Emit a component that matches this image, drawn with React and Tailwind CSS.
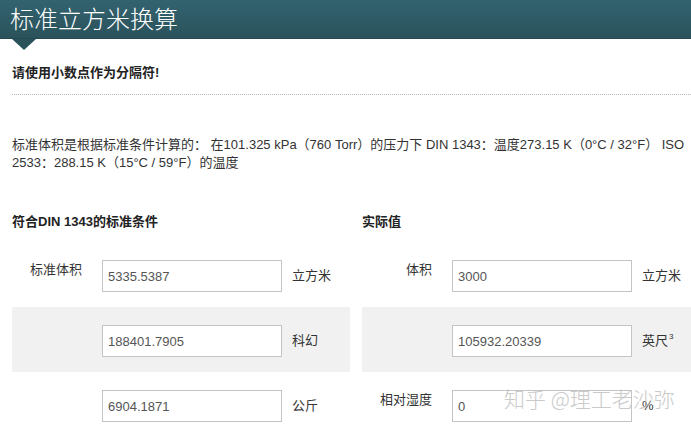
import React from "react";

const font = { fontFamily: '"Liberation Sans", Arial, "Noto Sans CJK SC", sans-serif' };

function Row({ label, value, unit, gray, sup }) {
  return (
    <div className={`h-[65px] flex items-start pt-[18px] ${gray ? "bg-[#f1f1f1]" : ""}`}>
      <div className="w-[70px] text-right text-[13px] leading-[18px] text-[#333] mt-[1px] shrink-0">{label}</div>
      <input
        readOnly
        value={value}
        className="ml-[20px] w-[180px] h-[32px] shrink-0 bg-white border border-[#c4c4c4] px-[5px] text-[13px] text-[#555] outline-none"
        style={font}
      />
      <div className="ml-[10px] h-[32px] flex items-center text-[13px] text-[#333] whitespace-nowrap">
        {unit}
        {sup ? <sup className="text-[8px] ml-[1px] -top-[4px]">3</sup> : null}
      </div>
    </div>
  );
}

export default function App() {
  return (
    <div className="w-[691px] h-[429px] overflow-hidden bg-white relative" style={font}>
      <div className="h-[39px] bg-gradient-to-b from-[#336370] to-[#2a525b] border-b border-[#254950] pl-[10px] flex items-center">
        <span className="text-white text-[24px] leading-none tracking-[0px] mt-[-2px]" style={{ fontFamily: '"Noto Sans CJK SC", sans-serif', fontWeight: 300 }}>
          标准立方米换算
        </span>
      </div>
      <div className="ml-[12px] w-0 h-0 border-l-[12px] border-r-[12px] border-t-[11px] border-l-transparent border-r-transparent border-t-[#2a525b]"></div>

      <div className="pl-[12px]">
        <div className="mt-[14px] pb-[12px] border-b border-dotted border-[#b8b8b8] text-[13px] leading-[18px] font-bold text-[#222]">
          请使用小数点作为分隔符!
        </div>

        <div className="mt-[41px] text-[13px] leading-[18px] text-[#333]">
          <div className="whitespace-nowrap">标准体积是根据标准条件计算的： 在101.325 kPa（760 Torr）的压力下 DIN 1343：温度273.15 K（0°C / 32°F） ISO</div>
          <div className="whitespace-nowrap">2533：288.15 K（15°C / 59°F）的温度</div>
        </div>

        <div className="mt-[41px] grid grid-cols-[338px_338px] gap-x-[12px]">
          <div className="text-[13px] leading-[18px] font-bold text-[#222]">符合DIN 1343的标准条件</div>
          <div className="text-[13px] leading-[18px] font-bold text-[#222]">实际值</div>
        </div>

        <div className="mt-[11px] grid grid-cols-[338px_338px] gap-x-[12px]">
          <div className="flex flex-col">
            <Row label="标准体积" value="5335.5387" unit="立方米" />
            <Row label="" value="188401.7905" unit="科幻" gray />
            <Row label="" value="6904.1871" unit="公斤" />
          </div>
          <div className="flex flex-col">
            <Row label="体积" value="3000" unit="立方米" />
            <Row label="" value="105932.20339" unit="英尺" gray sup />
            <Row label="相对湿度" value="0" unit="%" />
          </div>
        </div>
      </div>

      <div
        className="absolute left-[504px] top-[388px] text-[21px] leading-none text-[#bdbdbd] opacity-80 whitespace-nowrap pointer-events-none"
        style={{ fontFamily: '"Noto Sans CJK SC", sans-serif', fontWeight: 300 }}
      >
        知乎 @理工老沙弥
      </div>
    </div>
  );
}
